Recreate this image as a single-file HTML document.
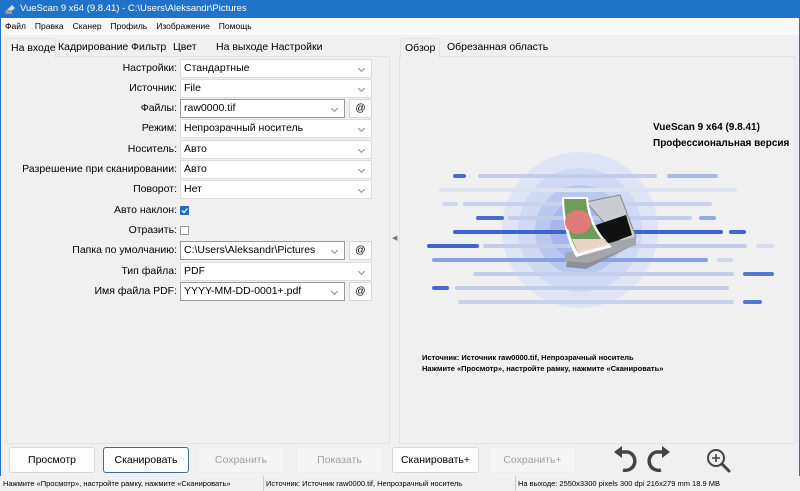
<!DOCTYPE html>
<html><head><meta charset="utf-8"><style>
*{box-sizing:border-box;margin:0;padding:0}
body{width:800px;height:491px;overflow:hidden;background:#f0f0f0;font-family:"Segoe UI","Liberation Sans","DejaVu Sans",sans-serif;font-size:11px;color:#000;position:relative}
.abs{position:absolute}
#title{left:0;top:0;width:800px;height:18px;background:#1f74c9;color:#fff;font-size:9.5px;line-height:18px;padding-left:20px}
#menu{left:0;top:18px;width:800px;height:17px;background:#f9f9f9;font-size:8.5px;line-height:17px}
#menu span{margin-left:5px;margin-right:4px}
.tab{position:absolute;top:38px;height:19px;line-height:19px;font-size:10.5px;white-space:nowrap}
.lbl{position:absolute;right:623px;font-size:10.5px;height:19px;line-height:19px;text-align:right;white-space:nowrap}
.sel{position:absolute;left:180px;width:192px;height:19px;background:#fff;border:1px solid #dcdcdc;font-size:10.5px;line-height:17px;padding-left:3px}
.sel:after{content:"";position:absolute;right:7px;top:6px;width:4px;height:4px;border-right:1px solid #888;border-bottom:1px solid #888;transform:rotate(45deg)}
.sel.s{width:165px;border-color:#999}
.at{position:absolute;left:349px;width:23px;height:19px;background:#fdfdfd;border:1px solid #d6d6d6;font-size:10px;text-align:center;line-height:17px}
.btn{position:absolute;top:447px;height:26px;background:#fdfdfd;border:1px solid #d8d8d8;border-radius:3px;font-size:10.5px;text-align:center;line-height:24px}
.dis{background:#f5f5f5;color:#a0a0a0;border-color:#eee}
#status{left:0;top:476px;width:800px;height:15px;font-size:7.5px;line-height:15px;background:#f0f0f0}
</style></head><body>
<div id="title" class="abs">VueScan 9 x64 (9.8.41) - C:\Users\Aleksandr\Pictures</div>
<svg class="abs" style="left:4px;top:3px" width="12" height="12"><path d="M1 9 L8 2 L11 5 L4 11Z" fill="#ddd"/><rect x="2" y="7" width="6" height="4" fill="#999"/></svg>
<div id="menu" class="abs"><span>Файл</span><span>Правка</span><span>Сканер</span><span>Профиль</span><span>Изображение</span><span>Помощь</span></div>
<div class="abs" style="left:0;top:0;width:1px;height:491px;background:#1f74c9"></div>
<div class="abs" style="left:799px;top:0;width:1px;height:491px;background:#1f74c9"></div>
<!-- left panel -->
<div class="abs" style="left:6px;top:56px;width:384px;height:388px;border:1px solid #e2e2e2;background:#f0f0f0"></div>
<div class="tab" style="left:6px;width:50px;padding-left:4px;background:#f0f0f0;border:1px solid #e2e2e2;border-bottom:none;height:20px">На входе</div>
<div class="tab" style="left:58px">Кадрирование</div>
<div class="tab" style="left:131px">Фильтр</div>
<div class="tab" style="left:173px">Цвет</div>
<div class="tab" style="left:216px">На выходе</div>
<div class="tab" style="left:271px">Настройки</div>

<div class="lbl" style="top:59px">Настройки:</div><div class="sel" style="top:59px">Стандартные</div>
<div class="lbl" style="top:79px">Источник:</div><div class="sel" style="top:79px">File</div>
<div class="lbl" style="top:99px">Файлы:</div><div class="sel s" style="top:99px">raw0000.tif</div><div class="at" style="top:99px">@</div>
<div class="lbl" style="top:119px">Режим:</div><div class="sel" style="top:119px">Непрозрачный носитель</div>
<div class="lbl" style="top:140px">Носитель:</div><div class="sel" style="top:140px">Авто</div>
<div class="lbl" style="top:160px">Разрешение при сканировании:</div><div class="sel" style="top:160px">Авто</div>
<div class="lbl" style="top:180px">Поворот:</div><div class="sel" style="top:180px">Нет</div>
<div class="lbl" style="top:201px">Авто наклон:</div>
<div class="abs" style="left:180px;top:206px;width:9px;height:9px;background:#1a6cc8;border-radius:1px"><svg width="9" height="9" style="display:block"><path d="M2 4.5 L4 6.5 L7.5 2.5" stroke="#fff" stroke-width="1.3" fill="none"/></svg></div>
<div class="lbl" style="top:221px">Отразить:</div>
<div class="abs" style="left:180px;top:226px;width:9px;height:9px;border:1px solid #999;background:#fff"></div>
<div class="lbl" style="top:241px">Папка по умолчанию:</div><div class="sel s" style="top:241px">C:\Users\Aleksandr\Pictures</div><div class="at" style="top:241px">@</div>
<div class="lbl" style="top:262px">Тип файла:</div><div class="sel" style="top:262px">PDF</div>
<div class="lbl" style="top:282px">Имя файла PDF:</div><div class="sel s" style="top:282px">YYYY-MM-DD-0001+.pdf</div><div class="at" style="top:282px">@</div>
<div class="abs" style="left:392px;top:234px;font-size:7px;color:#777">◀</div>
<!-- right panel -->
<div class="abs" style="left:399px;top:56px;width:397px;height:388px;border:1px solid #e2e2e2;background:#f0f0f0"></div>
<div class="tab" style="left:400px;padding:0 4px;background:#f0f0f0;border:1px solid #e2e2e2;border-bottom:none;height:20px">Обзор</div>
<div class="tab" style="left:447px">Обрезанная область</div>
<svg class="abs" style="left:400px;top:57px" width="395" height="386">
<circle cx="180" cy="173" r="78" fill="#dfe5f5"/>
<circle cx="180" cy="173" r="62" fill="#cfd9f3"/>
<circle cx="180" cy="173" r="45" fill="#b9c8ef"/>
<circle cx="180" cy="173" r="30" fill="#a6b8eb"/>
<g stroke-linecap="round" stroke-width="4">
<line x1="55" y1="119" x2="64" y2="119" stroke="#4a6ad0"/><line x1="80" y1="119" x2="255" y2="119" stroke="#c3cdea"/><line x1="269" y1="119" x2="316" y2="119" stroke="#a9b8e6"/>
<line x1="41" y1="133" x2="335" y2="133" stroke="#dde2f1"/>
<line x1="44" y1="147" x2="56" y2="147" stroke="#d0d8ee"/><line x1="65" y1="147" x2="310" y2="147" stroke="#c9d2ec"/>
<line x1="78" y1="161" x2="102" y2="161" stroke="#4a6ad0"/><line x1="110" y1="161" x2="290" y2="161" stroke="#c3cdea"/><line x1="301" y1="161" x2="314" y2="161" stroke="#96a9e3"/>
<line x1="55" y1="175" x2="321" y2="175" stroke="#3f63cf"/><line x1="331" y1="175" x2="344" y2="175" stroke="#3f63cf"/>
<line x1="29" y1="189" x2="77" y2="189" stroke="#3f63cf"/><line x1="85" y1="189" x2="345" y2="189" stroke="#c3cdea"/><line x1="358" y1="189" x2="372" y2="189" stroke="#d6dcee"/>
<line x1="34" y1="203" x2="306" y2="203" stroke="#8aa0e0"/><line x1="319" y1="203" x2="331" y2="203" stroke="#d0d7ee"/>
<line x1="75" y1="217" x2="332" y2="217" stroke="#c3cdea"/><line x1="345" y1="217" x2="372" y2="217" stroke="#5577d3"/>
<line x1="34" y1="231" x2="47" y2="231" stroke="#4a6ad0"/><line x1="57" y1="231" x2="327" y2="231" stroke="#c3cdea"/>
<line x1="60" y1="245" x2="332" y2="245" stroke="#c9d2ec"/><line x1="345" y1="245" x2="360" y2="245" stroke="#5577d3"/>
</g>
<path d="M168 200 L222 178 L234 188 L186 212 L166 210Z" fill="#8d9096"/>
<path d="M186 145 L220 138 L236 180 L222 186 Z" fill="#c9ccd1" stroke="#888" stroke-width="1"/>
<path d="M190 170 L226 158 L232 178 L200 190Z" fill="#111"/>
<path d="M165 196 L236 180 L236 188 L188 206 L165 204Z" fill="#a3a6ab"/>
<path d="M162 140 L188 140 Q190 170 212 190 L176 200 Q162 175 162 140Z" fill="#fff"/>
<path d="M164 142 L186 142 Q188 170 207 188 L178 196 Q165 174 164 142Z" fill="#6f9c5a"/>
<ellipse cx="178" cy="165" rx="13" ry="12" fill="#e27a7a"/>
<path d="M172 182 L205 182 L208 188 L178 196Z" fill="#e9d4c6"/>
<text x="253" y="73" font-size="10" font-family="Liberation Sans" font-weight="bold">VueScan 9 x64 (9.8.41)</text>
<text x="253" y="89" font-size="10" font-family="Liberation Sans" font-weight="bold">Профессиональная версия</text>
<text x="22" y="303" font-size="7.5" font-family="Liberation Sans" font-weight="bold">Источник: Источник raw0000.tif, Непрозрачный носитель</text>
<text x="22" y="314" font-size="7.5" font-family="Liberation Sans" font-weight="bold">Нажмите «Просмотр», настройте рамку, нажмите «Сканировать»</text>
</svg>
<div class="btn" style="left:9px;width:86px">Просмотр</div>
<div class="btn" style="left:103px;width:86px;border-color:#3b6c9a">Сканировать</div>
<div class="btn dis" style="left:198px;width:86px">Сохранить</div>
<div class="btn dis" style="left:296px;width:87px">Показать</div>
<div class="btn" style="left:392px;width:87px">Сканировать+</div>
<div class="btn dis" style="left:489px;width:87px">Сохранить+</div>
<svg class="abs" style="left:610px;top:446px" width="130" height="30">
<path d="M8 6 L18 6 A9 9 0 1 1 13 24" stroke="#444" stroke-width="3.5" fill="none"/><path d="M4 6 L12 0 L12 12Z" fill="#444"/>
<path d="M56 6 L46 6 A9 9 0 1 0 51 24" stroke="#444" stroke-width="3.5" fill="none"/><path d="M60 6 L52 0 L52 12Z" fill="#444"/>
<circle cx="106" cy="12" r="8" stroke="#444" stroke-width="2" fill="none"/><path d="M102 12 H110 M106 8 V16" stroke="#444" stroke-width="1.6"/><path d="M112 18 L119 25" stroke="#444" stroke-width="3" stroke-linecap="round"/>
</svg>
<div id="status" class="abs">
<span class="abs" style="left:3px">Нажмите «Просмотр», настройте рамку, нажмите «Сканировать»</span>
<span class="abs" style="left:263px;border-left:1px solid #ccc;padding-left:2px">Источник: Источник raw0000.tif, Непрозрачный носитель</span>
<span class="abs" style="left:515px;border-left:1px solid #ccc;padding-left:2px">На выходе: 2550x3300 pixels 300 dpi 216x279 mm 18.9 MB</span>
</div>
</body></html>
